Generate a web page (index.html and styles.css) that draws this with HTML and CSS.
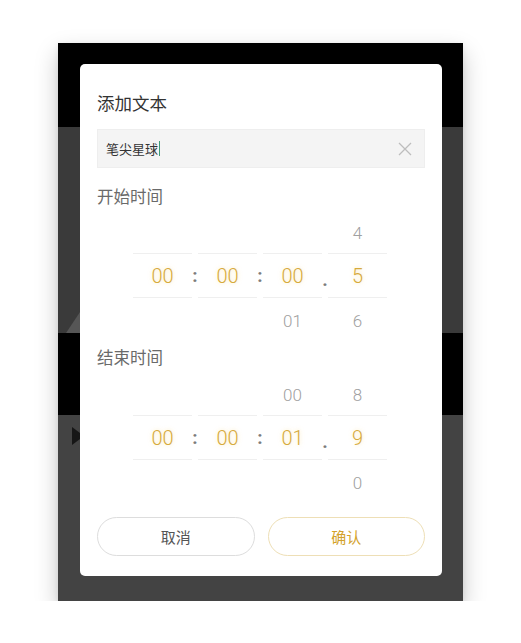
FILE: index.html
```html
<!DOCTYPE html>
<html lang="zh">
<head>
<meta charset="utf-8">
<link rel="stylesheet" href="styles.css">
</head>
<body>
<div class="screen">
  <div class="wedge"></div>
  <div class="play"></div>
  <div class="dialog">
    <div class="title">添加文本</div>
    <div class="input">
      <span class="input-text">笔尖星球</span><span class="caret"></span>
      <svg class="clear" width="14" height="14" viewBox="0 0 14 14"><path d="M1 1L13 13M13 1L1 13" stroke="#bdbdbd" stroke-width="1.3" fill="none"/></svg>
    </div>
    <div class="label">开始时间</div>
    <div class="picker">
      <div class="col"><div class="cell"></div><div class="cell mid">00</div><div class="cell"></div></div>
      <div class="sep"><div class="cell"></div><div class="cell">:</div><div class="cell"></div></div>
      <div class="col"><div class="cell"></div><div class="cell mid">00</div><div class="cell"></div></div>
      <div class="sep"><div class="cell"></div><div class="cell">:</div><div class="cell"></div></div>
      <div class="col"><div class="cell"></div><div class="cell mid">00</div><div class="cell">01</div></div>
      <div class="sep dot"><div class="cell"></div><div class="cell">.</div><div class="cell"></div></div>
      <div class="col"><div class="cell">4</div><div class="cell mid">5</div><div class="cell">6</div></div>
    </div>
    <div class="label label-end">结束时间</div>
    <div class="picker picker-end">
      <div class="col"><div class="cell"></div><div class="cell mid">00</div><div class="cell"></div></div>
      <div class="sep"><div class="cell"></div><div class="cell">:</div><div class="cell"></div></div>
      <div class="col"><div class="cell"></div><div class="cell mid">00</div><div class="cell"></div></div>
      <div class="sep"><div class="cell"></div><div class="cell">:</div><div class="cell"></div></div>
      <div class="col"><div class="cell">00</div><div class="cell mid">01</div><div class="cell"></div></div>
      <div class="sep dot"><div class="cell"></div><div class="cell">.</div><div class="cell"></div></div>
      <div class="col"><div class="cell">8</div><div class="cell mid">9</div><div class="cell">0</div></div>
    </div>
    <div class="buttons">
      <div class="btn btn-cancel">取消</div>
      <div class="btn btn-ok">确认</div>
    </div>
  </div>
</div>
</body>
</html>
```
FILE: styles.css
```css
html, body {
  margin: 0;
  padding: 0;
  background: #ffffff;
}
body {
  font-family: "Noto Sans CJK SC", "Noto Sans", sans-serif;
  padding: 43px 0 0 58px;
}
.screen {
  position: relative;
  width: 405px;
  height: 558px;
  box-sizing: border-box;
  padding: 21px 21px 0 22px;
  background: linear-gradient(to bottom,
    #000 0, #000 84px,
    #3a3a3a 84px, #3a3a3a 290px,
    #000 290px, #000 372px,
    #434343 372px, #434343 558px);
  box-shadow: 0 10px 22px rgba(0, 0, 0, 0.22), 0 2px 6px rgba(0, 0, 0, 0.08);
}
.wedge {
  position: absolute;
  left: 8px;
  top: 266px;
  width: 16px;
  height: 24px;
  background: #565656;
  clip-path: polygon(100% 0, 100% 100%, 0 100%);
}
.play {
  position: absolute;
  left: 14px;
  top: 384px;
  width: 0;
  height: 0;
  border-top: 9px solid transparent;
  border-bottom: 9px solid transparent;
  border-left: 12px solid #161616;
}
.dialog {
  position: relative;
  width: 362px;
  height: 512px;
  box-sizing: border-box;
  background: #fff;
  border-radius: 5px;
  padding: 27px 17px 20px 17px;
}
.title {
  font-size: 17.5px;
  line-height: 24px;
  color: #333;
}
.input {
  margin-top: 14px;
  height: 39px;
  box-sizing: border-box;
  background: #f4f4f4;
  border: 1px solid #eeeeee;
  display: flex;
  align-items: center;
  padding: 0 12px 0 8px;
}
.input-text {
  font-size: 13px;
  color: #333;
}
.caret {
  width: 1px;
  height: 15px;
  background: #3c9a78;
  margin-left: 1px;
}
.clear {
  margin-left: auto;
}
.label {
  margin-top: 17px;
  font-size: 16.5px;
  line-height: 22px;
  color: #6a6a6a;
}
.label-end {
  margin-top: 3px;
}
.picker {
  margin-top: 1px;
  margin-left: 36px;
  display: flex;
  font-family: "Roboto", "Noto Sans", sans-serif;
  font-weight: 300;
}
.picker-end {
  margin-top: 2px;
}
.col {
  width: 59px;
  display: flex;
  flex-direction: column;
}
.sep {
  width: 6px;
  display: flex;
  flex-direction: column;
}
.cell {
  height: 45px;
  display: flex;
  align-items: center;
  justify-content: center;
  font-size: 17px;
  color: #a0a0a0;
  box-sizing: border-box;
}
.sep .cell {
  color: #7c7c7c;
  font-size: 19px;
  font-weight: 700;
}
.sep.dot .cell {
  padding-top: 8px;
}
.col .cell:first-child {
  padding-top: 4px;
}
.col .cell.mid {
  border-top: 1px solid #efefef;
  border-bottom: 1px solid #efefef;
  font-size: 20px;
  color: #d6aa3c;
  text-shadow: 0 0 4px rgba(250, 210, 110, 0.55);
}
.buttons {
  margin-top: 12px;
  display: flex;
  gap: 13px;
}
.btn {
  flex: 1;
  height: 39px;
  box-sizing: border-box;
  border-radius: 20px;
  display: flex;
  align-items: center;
  justify-content: center;
  font-size: 15px;
}
.btn-cancel {
  border: 1px solid #dddddd;
  color: #555;
}
.btn-ok {
  border: 1px solid #eedfb6;
  color: #d3a22a;
}
```
